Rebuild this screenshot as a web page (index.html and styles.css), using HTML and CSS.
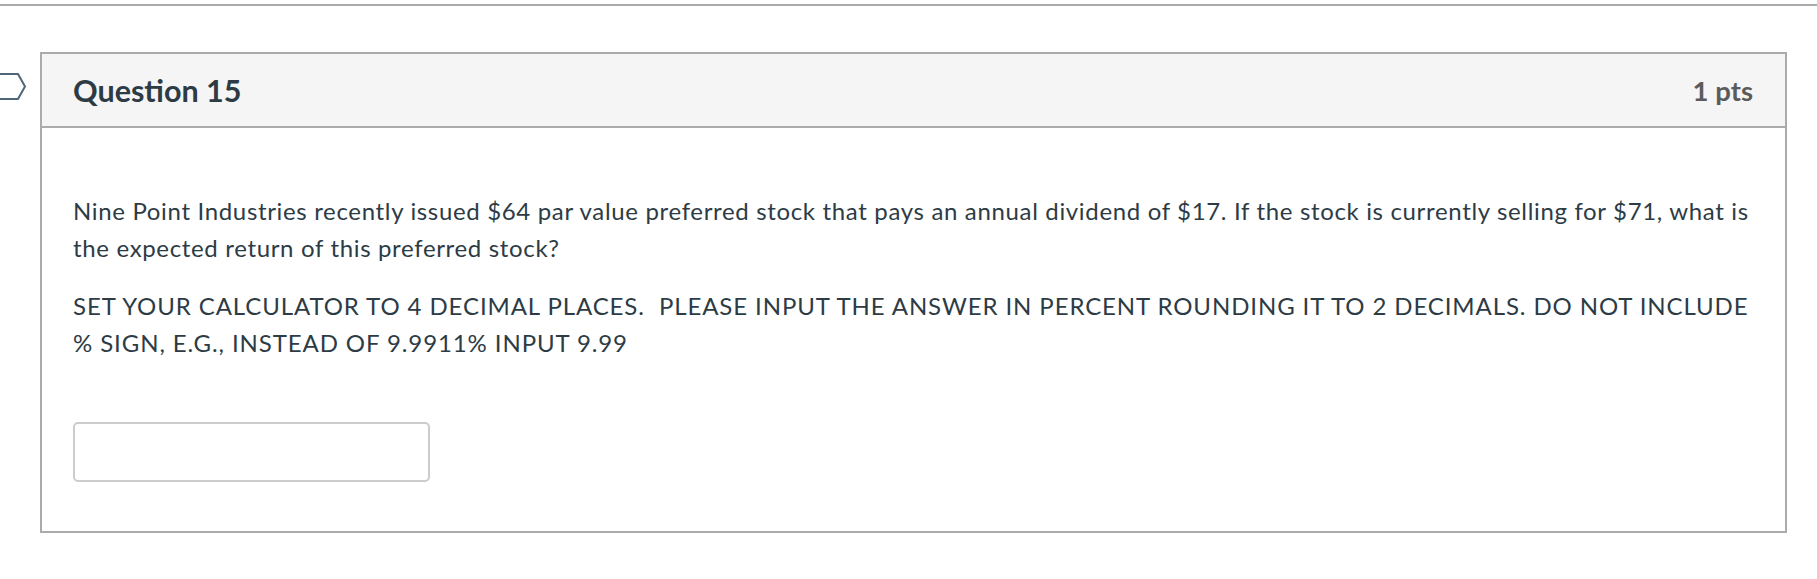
FILE: index.html
```html
<!DOCTYPE html>
<html>
<head>
<meta charset="utf-8">
<link rel="stylesheet" href="styles.css">
</head>
<body>
<div class="rule"></div>
<div class="row">
  <div class="flag-col">
    <svg class="flag" width="27" height="30" viewBox="0 0 27 30">
      <path d="M-4 2 H18 L25 14.5 L18 27 H-4" fill="none" stroke="#4e6679" stroke-width="2"/>
    </svg>
  </div>
  <div class="question">
    <div class="q-header">
      <span class="q-title">Question 15</span>
      <span class="q-pts">1 pts</span>
    </div>
    <div class="q-body">
      <p class="q-text">Nine Point Industries recently issued $64 par value preferred stock that pays an annual dividend of $17. If the stock is currently selling for $71, what is the expected return of this preferred stock?</p>
      <p class="q-text q-note">SET YOUR CALCULATOR TO 4 DECIMAL PLACES.&nbsp; PLEASE INPUT THE ANSWER IN PERCENT ROUNDING IT TO 2 DECIMALS. DO NOT INCLUDE % SIGN, E.G., INSTEAD OF 9.9911% INPUT 9.99</p>
      <input class="answer" type="text">
    </div>
  </div>
</div>
</body>
</html>
```

FILE: styles.css
```css
html, body {
  margin: 0;
  padding: 0;
  background: #ffffff;
}
body {
  font-family: Lato, "Open Sans", sans-serif;
  color: #2d3b45;
}
.rule {
  margin-top: 4px;
  height: 2px;
  background: #a9a9a9;
}
.row {
  display: flex;
  margin-top: 46px;
  width: 1787px;
}
.flag-col {
  width: 40px;
  flex: none;
}
.flag {
  display: block;
  margin-top: 20px;
}
.question {
  flex: 1;
  border: 2px solid #ababab;
}
.q-header {
  display: flex;
  justify-content: space-between;
  align-items: center;
  height: 72px;
  padding: 0 32px 0 31px;
  background: #f5f5f5;
  border-bottom: 2px solid #ababab;
}
.q-title {
  font-size: 30.5px;
  font-weight: 700;
  color: #2d3b45;
}
.q-pts {
  font-size: 27.5px;
  font-weight: 700;
  color: #5b5b5b;
}
.q-body {
  padding: 64px 28px 49px 31px;
}
.q-text {
  margin: 0 0 21px 0;
  font-size: 24px;
  letter-spacing: 0.66px;
  line-height: 37px;
}
.q-note {
  letter-spacing: 0.9px;
}
.answer {
  display: block;
  margin-top: 61px;
  width: 357px;
  height: 60px;
  box-sizing: border-box;
  border: 2px solid #cccccc;
  border-radius: 5px;
  background: #fff;
  font-family: Lato, sans-serif;
  font-size: 20px;
  padding: 0 10px;
}
```
